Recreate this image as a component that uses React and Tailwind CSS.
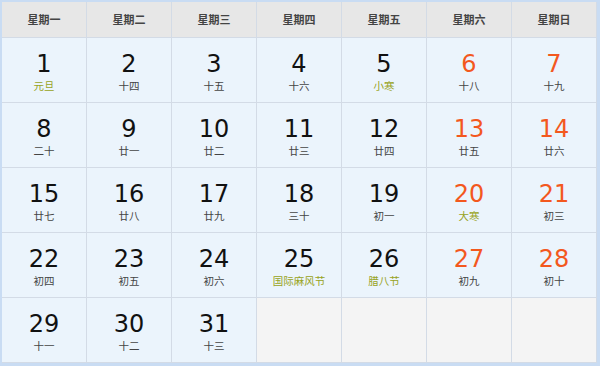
import React from "react";

const heads = ["星期一", "星期二", "星期三", "星期四", "星期五", "星期六", "星期日"];

const days = [
  [1, "元旦", true], [2, "十四"], [3, "十五"], [4, "十六"], [5, "小寒", true], [6, "十八"], [7, "十九"],
  [8, "二十"], [9, "廿一"], [10, "廿二"], [11, "廿三"], [12, "廿四"], [13, "廿五"], [14, "廿六"],
  [15, "廿七"], [16, "廿八"], [17, "廿九"], [18, "三十"], [19, "初一"], [20, "大寒", true], [21, "初三"],
  [22, "初四"], [23, "初五"], [24, "初六"], [25, "国际麻风节", true], [26, "腊八节", true], [27, "初九"], [28, "初十"],
  [29, "十一"], [30, "十二"], [31, "十三"], null, null, null, null,
];

export default function App() {
  return (
    <div className="w-[600px] h-[366px] bg-white">
      <div className="w-[600px] h-[366px] border-l-2 border-t-2 border-r-[3px] border-b-[3px] border-[#c9dcf3] grid grid-cols-[repeat(7,85px)] grid-rows-[36px_repeat(5,65px)]">
        {heads.map((h) => (
          <div
            key={h}
            className="bg-[#e7e7e7] border-r border-b border-[#d3dbe6] flex items-center justify-center text-[11px] font-bold text-[#444] [font-family:'Noto_Sans_CJK_SC',sans-serif]"
          >
            {h}
          </div>
        ))}
        {days.map((d, i) => {
          if (!d) {
            return <div key={i} className="bg-[#f4f4f4] border-r border-b border-[#d3dbe6]" />;
          }
          const [n, l, fest] = d;
          const weekend = i % 7 >= 5;
          return (
            <div
              key={i}
              className="bg-[#ebf4fc] border-r border-b border-[#d3dbe6] flex flex-col items-center pt-[14px]"
            >
              <div
                className={
                  "text-[24px] leading-[24px] [font-family:'DejaVu_Sans',sans-serif] " +
                  (weekend ? "text-[#f3581e]" : "text-[#111]")
                }
              >
                {n}
              </div>
              <div
                className={
                  "mt-[3px] text-[10.5px] leading-[14px] [font-family:'Noto_Sans_CJK_SC',sans-serif] " +
                  (fest ? "text-[#98a322]" : "text-[#444]")
                }
              >
                {l}
              </div>
            </div>
          );
        })}
      </div>
    </div>
  );
}
